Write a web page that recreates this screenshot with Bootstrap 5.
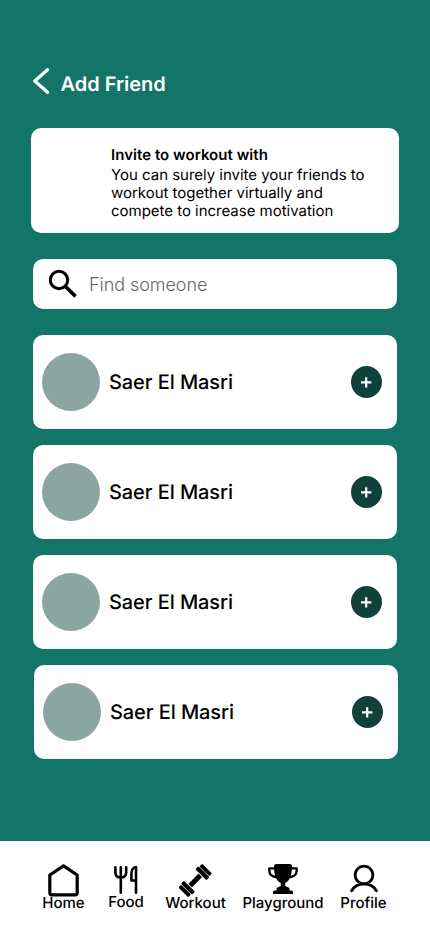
<!DOCTYPE html>
<html lang="en">
<head>
<meta charset="utf-8">
<meta name="viewport" content="width=device-width, initial-scale=1">
<title>Add Friend</title>
<link href="https://cdn.jsdelivr.net/npm/bootstrap@5.3.0/dist/css/bootstrap.min.css" rel="stylesheet">
<style>
body{font-family:Inter,"Liberation Sans",sans-serif;background:#137468;color:#000;text-rendering:geometricPrecision}
.screen{width:430px;height:932px;overflow:hidden}
svg{display:block;flex:none}
.top-row{height:128px;padding:67px 0 0 32px}
.page-title{font-size:20px;line-height:24px;font-weight:600;letter-spacing:-.03px;margin:5px 0 0 10.5px}
.panel{background:#fff;border-radius:10px}
.invite{width:368px;height:105px;margin-left:31px;padding:18px 0 0 80px;font-size:15px;line-height:18px}
.invite h2{font-size:15px;line-height:18px;font-weight:600;letter-spacing:.04px;margin:0 0 2px}
.invite p{letter-spacing:-.02px}
.finder{width:364px;height:50px;margin:26px 0 0 33px;padding-left:15px}
.finder input{font-size:18px;font-weight:300;line-height:22px;letter-spacing:-.06px;margin-left:11px;padding:2px 0 0;width:290px;color:#000}
.finder input::placeholder{color:#666;opacity:1}
.people{margin:26px 32px 0 33px;gap:16px}
.person{width:364px;height:94px;padding:0 15px 0 9px}
.avatar{width:58px;height:58px;background:#8ba6a1}
.person-name{font-size:20px;line-height:24px;font-weight:500;letter-spacing:-.08px;margin-left:9px}
.add{width:31px;height:32px;background:#10413b;border-radius:50%}
.tabs{height:91px;background:#fff;padding:23px 0 0 42px;font-size:15px;line-height:18px;font-weight:500}
.tabs a{color:#000;text-decoration:none;white-space:nowrap}
.tab-icon{height:30px}
.tab-home{width:43px}
.tab-food{width:36px;margin-left:23px}
.tab-food .tab-icon{height:29px}
.tab-workout{width:61px;margin-left:21px}
.tab-play{width:82px;margin-left:16px}
.tab-profile{width:47px;margin-left:16px}
</style>
</head>
<body>
<div class="screen d-flex flex-column">
  <header class="top-row d-flex align-items-start">
    <svg width="18" height="28" viewBox="0 0 18 28" fill="none" stroke="#fff" stroke-width="3.4" stroke-linecap="round" stroke-linejoin="round"><path d="M15.500 2.800 2.800 14l12.700 11.200"/></svg>
    <h1 class="page-title text-white">Add Friend</h1>
  </header>
  <section class="panel invite">
    <h2>Invite to workout with</h2>
    <p class="mb-0">You can surely invite your friends to<br>workout together virtually and<br>compete to increase motivation</p>
  </section>
  <div class="panel finder d-flex align-items-center">
    <svg width="30" height="30" viewBox="0 0 30 30" fill="none" stroke="#000"><circle cx="11" cy="11" r="8.700" stroke-width="3"/><path d="m17 17 10.500 10.400" stroke-width="3.600"/></svg>
    <input class="border-0 bg-transparent" type="text" placeholder="Find someone" aria-label="Find someone">
  </div>
  <main class="people d-flex flex-column">
    <div class="panel person d-flex align-items-center"><span class="avatar rounded-circle"></span><span class="person-name">Saer El Masri</span><button class="add btn p-0 border-0 ms-auto d-flex align-items-center justify-content-center" aria-label="Add"><svg width="11" height="12" viewBox="0 0 11 12" stroke="#fff" stroke-width="2.200"><path d="M0 6.300h10.400M5.200 1.200v10.200"/></svg></button></div>
    <div class="panel person d-flex align-items-center"><span class="avatar rounded-circle"></span><span class="person-name">Saer El Masri</span><button class="add btn p-0 border-0 ms-auto d-flex align-items-center justify-content-center" aria-label="Add"><svg width="11" height="12" viewBox="0 0 11 12" stroke="#fff" stroke-width="2.200"><path d="M0 6.300h10.400M5.200 1.200v10.200"/></svg></button></div>
    <div class="panel person d-flex align-items-center"><span class="avatar rounded-circle"></span><span class="person-name">Saer El Masri</span><button class="add btn p-0 border-0 ms-auto d-flex align-items-center justify-content-center" aria-label="Add"><svg width="11" height="12" viewBox="0 0 11 12" stroke="#fff" stroke-width="2.200"><path d="M0 6.300h10.400M5.200 1.200v10.200"/></svg></button></div>
    <div class="panel person d-flex align-items-center align-self-end"><span class="avatar rounded-circle"></span><span class="person-name">Saer El Masri</span><button class="add btn p-0 border-0 ms-auto d-flex align-items-center justify-content-center" aria-label="Add"><svg width="11" height="12" viewBox="0 0 11 12" stroke="#fff" stroke-width="2.200"><path d="M0 6.300h10.400M5.200 1.200v10.200"/></svg></button></div>
  </main>
  <nav class="tabs d-flex align-items-start mt-auto">
    <a href="#" class="tab-home d-flex flex-column align-items-center">
      <span class="tab-icon"><svg width="32" height="33" viewBox="0 0 32 33" fill="none" stroke="#000" stroke-width="3.200" stroke-linejoin="round"><path d="M15.500 1.800 29.200 11v17.800a2 2 0 0 1-2 2H3.800a2 2 0 0 1-2-2V11z"/></svg></span>
      <span>Home</span></a>
    <a href="#" class="tab-food d-flex flex-column align-items-center">
      <span class="tab-icon"><svg width="24" height="31" viewBox="0 0 24 31" fill="none" stroke="#000" stroke-width="2.600" stroke-linecap="round" stroke-linejoin="round"><path d="M1.400 3.200v5.300c0 3.300 2.100 5 5.400 5s5.400-1.700 5.400-5V3.200M6.800 3.200v25.600"/><path d="M22 28.800V3c-2.800 0-4.600 3.200-4.600 7.300v6.200H22"/></svg></span>
      <span>Food</span></a>
    <a href="#" class="tab-workout d-flex flex-column align-items-center">
      <span class="tab-icon"><svg width="34" height="33" viewBox="0 0 34 33"><g transform="translate(16.200 16.500) rotate(-45)"><rect x="-7.200" y="-2.500" width="14.400" height="5" rx=".6"/><rect x="-12.300" y="-7.800" width="4.200" height="15.600" rx="1"/><rect x="8.100" y="-7.800" width="4.200" height="15.600" rx="1"/><rect x="-16.800" y="-6.900" width="3.900" height="13.800" rx="1"/><rect x="12.900" y="-6.900" width="3.900" height="13.800" rx="1"/></g></svg></span>
      <span>Workout</span></a>
    <a href="#" class="tab-play d-flex flex-column align-items-center">
      <span class="tab-icon"><svg width="30" height="30" viewBox="0 0 30 30"><path d="M6 2Q6 0 8.500 0h13Q24 0 24 2c0 9-2.200 15-6.800 17v3l4.300 2v2.500h2q1.500 0 1.500 1.500v2H5v-2q0-1.500 1.500-1.500h2V24l4.300-2v-3C8.200 17 6 11 6 2z"/><path d="M8 4.300H1.300v2C1.300 10 4 12.900 9.300 13.300M22 4.300h6.700v2c0 3.700-2.700 6.600-8 7" fill="none" stroke="#000" stroke-width="2.300" stroke-linejoin="round"/></svg></span>
      <span>Playground</span></a>
    <a href="#" class="tab-profile d-flex flex-column align-items-center">
      <span class="tab-icon"><svg width="30" height="30" viewBox="0 0 30 30" fill="none" stroke="#000" stroke-width="2.900" stroke-linecap="round"><circle cx="15" cy="11" r="8.900"/><path d="M2.600 26.700c2.700-4.300 7.300-6.800 12.400-6.800s9.700 2.500 12.400 6.800"/></svg></span>
      <span>Profile</span></a>
  </nav>
</div>
<script src="https://cdn.jsdelivr.net/npm/bootstrap@5.3.0/dist/js/bootstrap.bundle.min.js"></script>
</body>
</html>
